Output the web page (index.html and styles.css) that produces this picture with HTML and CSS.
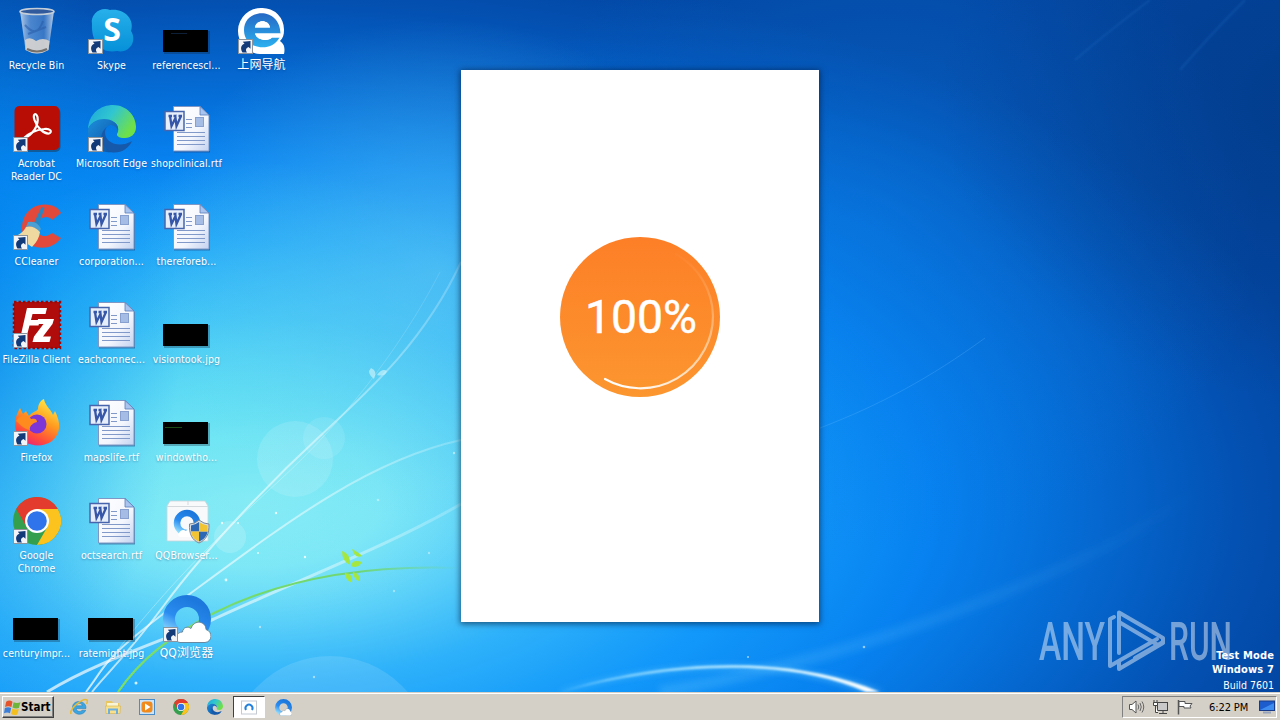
FILE: index.html
```html
<!DOCTYPE html>
<html lang="en">

<head>
    <meta charset="utf-8">
    <title>Desktop</title>
    <link rel="stylesheet" href="styles.css">
</head>

<body>
    <!-- shared icons -->
    <svg class="defs" width="0" height="0">
        <defs>
            <linearGradient id="paper" x1="0" y1="0" x2="1" y2="1">
                <stop offset="0" stop-color="#fff" />
                <stop offset=".6" stop-color="#f3f6fd" />
                <stop offset="1" stop-color="#c3d2f0" />
            </linearGradient>
            <linearGradient id="edgeTop" x1="0" y1="0" x2="1" y2=".5">
                <stop offset="0" stop-color="#1ba4dc" />
                <stop offset=".5" stop-color="#30c6d0" />
                <stop offset="1" stop-color="#6fe048" />
            </linearGradient>
            <linearGradient id="edgeLow" x1="0" y1="0" x2="1" y2="1">
                <stop offset="0" stop-color="#1d8fdc" />
                <stop offset="1" stop-color="#0c4ea0" />
            </linearGradient>
            <linearGradient id="qqRing" x1=".7" y1="0" x2=".2" y2="1">
                <stop offset="0" stop-color="#1c78dc" />
                <stop offset=".55" stop-color="#2b8cf0" />
                <stop offset="1" stop-color="#8fdcff" />
            </linearGradient>
            <linearGradient id="foxBody" x1=".8" y1="0" x2=".3" y2="1">
                <stop offset="0" stop-color="#fff04a" />
                <stop offset=".45" stop-color="#ff9a1f" />
                <stop offset=".8" stop-color="#ff4a3c" />
                <stop offset="1" stop-color="#e8257a" />
            </linearGradient>
            <linearGradient id="skypeBg" x1="0" y1="0" x2="0" y2="1">
                <stop offset="0" stop-color="#27b0ea" />
                <stop offset="1" stop-color="#0690d8" />
            </linearGradient>
            <linearGradient id="glass" x1="0" y1="0" x2="1" y2="0">
                <stop offset="0" stop-color="#c9d9ec" stop-opacity=".9" />
                <stop offset=".3" stop-color="#7ba3da" stop-opacity=".6" />
                <stop offset=".7" stop-color="#5a88ca" stop-opacity=".6" />
                <stop offset="1" stop-color="#d0deee" stop-opacity=".9" />
            </linearGradient>
            <linearGradient id="navBlue" x1="0" y1="0" x2="0" y2="1">
                <stop offset="0" stop-color="#2568c4" />
                <stop offset="1" stop-color="#2bb0f0" />
            </linearGradient>

            <symbol id="arrow" viewBox="0 0 15 15">
                <rect x=".5" y=".5" width="14" height="14" fill="#f2f4f7" stroke="#8d949c" />
                <path d="M4.500 13.500C2 9.500 3 6 6.500 4.800L4.800 2.800 12.500 2V9.800L10.500 8C8 9 7.200 11 9 13.500Z" fill="#123a78" />
            </symbol>

            <symbol id="word" viewBox="0 0 48 48">
                <path d="M11 2.500H38L47 11V47.500H11Z" fill="#1c3c78" opacity=".5" />
                <path d="M10.500 1.500H37L46 10V46H10.500Z" fill="url(#paper)" stroke="#7f97c4" />
                <path d="M37 1.500V10H46Z" fill="#a9c4ee" stroke="#5c7dba" stroke-width=".8" />
                <path d="M23 14.500H29M23 18.500H29M23 22.500H29M14 27.500H42M14 31.500H42M14 35.500H42M14 39.500H42" stroke="#8099c8" />
                <rect x="32.500" y="12.500" width="8" height="9" fill="#a5bce4" stroke="#87a0d0" />
                <rect x="2" y="6.500" width="19" height="19" fill="#e6eefc" stroke="#4765ac" stroke-width="1.500" />
                <path d="M5.500 11H9M7 11L8.500 21 12.500 13 13.500 21 18 11M10.500 11H13.500M15.500 11H19" fill="none" stroke="#3656a8" stroke-width="2.300" />
            </symbol>

            <symbol id="thumb" viewBox="0 0 48 48">
                <rect x="1" y="24" width="46" height="23" fill="#123" opacity=".3" />
                <rect x="0" y="23" width="45" height="22" />
            </symbol>

            <symbol id="chrome" viewBox="0 0 48 48">
                <circle cx="24" cy="24" r="24" fill="#34a04e" />
                <path d="M3.200 12L13.600 30 24 24V12H44.800A24 24 0 0 0 3.200 12Z" fill="#e33b2e" />
                <path d="M24 12H44.800A24 24 0 0 1 24 48L34.400 30Z" fill="#fcc31e" />
                <circle cx="24" cy="24" r="12" fill="#fff" />
                <circle cx="24" cy="24" r="9.800" fill="#2f74ea" />
            </symbol>

            <symbol id="edge" viewBox="0 0 48 48">
                <path d="M0 24C1 8 13 0 25 0C39 0 48 11 48 22C48 29 43 33 37 33C31 33 27 31 30 27C32 18 24 15 16 15C7 15 2 19 0 24Z" fill="url(#edgeTop)" />
                <path d="M0 25C2 18 8 14 16 14C25 14 31 19 30 26C29 22 25 20 22 20C12 22 12 40 26 47C12 49 -1 39 0 25Z" fill="url(#edgeLow)" />
                <path d="M22 20C17 22 16 27 18 32C22 40 34 42 44 36C41 43 34 48 25 47.500C11 43 9 26 22 20Z" fill="#1659aa" />
            </symbol>

            <symbol id="qq" viewBox="0 0 48 48">
                <circle cx="24" cy="24" r="18" fill="none" stroke="url(#qqRing)" stroke-width="12" />
                <path d="M17 47.500C11 47 12 37 19.500 37C20 32 25 31 28 33.500C31 24 43 26 43 34.500C50 36.500 49.500 47 42 47.500Z" fill="#fff" stroke="#5f7f96" stroke-width=".9" />
            </symbol>
        </defs>
    </svg>

    <div class="screen">
        <div class="desktop">
            <svg class="wallpaper" viewBox="0 0 1280 692" width="1280" height="692">
                <defs>
                    <linearGradient id="fadeGreen" gradientUnits="userSpaceOnUse" x1="118" y1="0" x2="460" y2="0">
                        <stop offset="0" stop-color="#7ddf62" />
                        <stop offset=".7" stop-color="#6fd673" />
                        <stop offset="1" stop-color="#6fd673" stop-opacity="0" />
                    </linearGradient>
                    <linearGradient id="fadeWhite" gradientUnits="userSpaceOnUse" x1="60" y1="0" x2="460" y2="0">
                        <stop offset="0" stop-color="#fff" stop-opacity=".7" />
                        <stop offset=".5" stop-color="#fff" stop-opacity=".55" />
                        <stop offset="1" stop-color="#fff" stop-opacity=".2" />
                    </linearGradient>
                    <linearGradient id="swoosh" gradientUnits="userSpaceOnUse" x1="560" y1="0" x2="880" y2="0">
                        <stop offset="0" stop-color="#8fdcff" stop-opacity=".7" />
                        <stop offset=".6" stop-color="#c8f0ff" />
                        <stop offset="1" stop-color="#fff" />
                    </linearGradient>
                    <linearGradient id="ray" gradientUnits="userSpaceOnUse" x1="660" y1="0" x2="1200" y2="0">
                        <stop offset="0" stop-color="#5cc0ff" stop-opacity=".3" />
                        <stop offset="1" stop-color="#5cc0ff" stop-opacity="0" />
                    </linearGradient>
                    <filter id="soft" x="-10%" y="-30%" width="120%" height="160%">
                        <feGaussianBlur stdDeviation="3" />
                    </filter>
                    <filter id="softer" x="-10%" y="-30%" width="120%" height="160%">
                        <feGaussianBlur stdDeviation="0.8" />
                    </filter>
                </defs>
                <!-- bubbles -->
                <g fill="#fff">
                    <circle cx="295" cy="459" r="38" opacity=".13" />
                    <circle cx="324" cy="438" r="21" opacity=".1" />
                    <circle cx="230" cy="537" r="16" opacity=".17" />
                    <circle cx="330" cy="758" r="102" opacity=".12" />
                    <circle cx="238" cy="523" r="1" opacity=".8" />
                    <circle cx="276" cy="513" r="1.200" opacity=".8" />
                    <circle cx="222" cy="523" r="1.200" opacity=".8" />
                    <circle cx="226" cy="580" r="1.400" opacity=".8" />
                    <circle cx="258" cy="553" r="1" opacity=".8" />
                    <circle cx="305" cy="557" r="1.200" opacity=".8" />
                    <circle cx="260" cy="627" r="1.200" opacity=".5" />
                    <circle cx="378" cy="500" r="1.300" opacity=".4" />
                    <circle cx="454" cy="453" r="1.200" opacity=".5" />
                    <circle cx="429" cy="553" r="1.200" opacity=".4" />
                    <circle cx="394" cy="591" r="1.200" opacity=".4" />
                    <circle cx="136" cy="683" r="1.500" opacity=".8" />
                    <circle cx="314" cy="677" r="1.200" opacity=".5" />
                    <circle cx="748" cy="657" r="1" opacity=".6" />
                    <circle cx="864" cy="647" r="1.300" opacity=".6" />
                </g>
                <!-- light rays -->
                <path d="M660 692C820 665 980 610 1120 540L1280 440" fill="none" stroke="url(#ray)" stroke-width="12" filter="url(#soft)" />
                <path d="M820 428C880 405 930 378 985 338" fill="none" stroke="#6cc0ff" stroke-opacity=".25" />
                <path d="M1180 70Q1210 35 1245 0M1075 60Q1110 30 1150 0" fill="none" stroke="#3f8ee0" stroke-opacity=".17" stroke-width="2" filter="url(#softer)" />
                <!-- stems -->
                <g fill="none" stroke="url(#fadeWhite)">
                    <path d="M461 262C425 340 372 388 320 436S205 550 165 604S105 675 92 692" stroke-width="2" />
                    <path d="M440 272C400 350 340 425 280 480S160 590 86 692" stroke-width="1" opacity=".5" />
                    <path d="M461 440C370 460 290 520 195 590S110 660 86 692" stroke-width="2" />
                    <path d="M461 504C390 545 310 575 214 619C150 645 90 665 47 692" stroke-width="3" />
                </g>
                <path d="M461 568C380 565 290 575 214 613C170 636 140 660 118 692" fill="none" stroke="url(#fadeGreen)" stroke-width="2.200" />
                <g fill="#a5e640">
                    <path d="M342 551Q351 554 350 565Q342 561 342 551ZM352 549Q361 554 362 556Q355 559 352 549ZM351 566Q352 559 362 562Q358 569 351 566ZM345 573Q353 573 352 583Q345 580 345 573ZM353 572Q361 574 359 581Q354 580 353 572Z" />
                </g>
                <g fill="#c5f1fa" opacity=".7">
                    <path d="M374 379Q366 373 371 368Q378 371 374 379ZM377 375Q382 368 387 371Q385 377 377 375Z" />
                </g>
                <!-- bottom swoosh -->
                <path d="M558 692C650 662 780 652 884 692L864 692C780 658 660 664 564 692Z" fill="#7fd4ff" opacity=".5" filter="url(#soft)" />
                <path d="M560 692C650 663 780 650 880 692H866C782 655 660 664.500 560 692Z" fill="url(#swoosh)" filter="url(#softer)" />
            </svg>

            <div class="icons">
                <div class="icon">
                    <svg viewBox="0 0 48 48">
                        <path d="M7 4L12.500 43Q24 50 35.500 43L41 4Z" fill="url(#glass)" />
                        <path d="M12 33Q17 29 23 34Q30 30 36.500 34L35.500 43Q24 50 12.500 43Z" fill="#d9d5cf" opacity=".9" />
                        <path d="M14 42Q24 47 34 42" fill="none" stroke="#74706c" stroke-width="2" />
                        <path d="M12 18Q24 32 30 14M15 27L33 20" fill="none" stroke="#2c5da8" stroke-width="2" opacity=".6" />
                        <ellipse cx="24" cy="4.500" rx="17" ry="3" fill="#315a9c" stroke="#c4ced8" stroke-width="1.600" />
                    </svg>
                    <span class="label">Recycle Bin</span>
                </div>
                <div class="icon">
                    <svg viewBox="0 0 48 48">
                        <path d="M4 17C2 7 13 -1 22 3C36 1 47 12 43 24C50 35 40 47 29 44C14 47 3 36 4 17Z" fill="url(#skypeBg)" />
                        <text class="skype-s" x="24" y="34" text-anchor="middle">S</text>
                        <use href="#arrow" x="0" y="32" width="15" height="15" />
                    </svg>
                    <span class="label">Skype</span>
                </div>
                <div class="icon">
                    <svg viewBox="0 0 48 48">
                        <use href="#thumb" />
                        <path d="M8 26.500H24" stroke="#0e2038" />
                    </svg>
                    <span class="label">referencescl...</span>
                </div>
                <div class="icon">
                    <svg viewBox="0 0 48 48">
                        <path d="M24 1A21.500 21.500 0 0 1 46 23C46 28 45 31 42 34Q48 38 46 47H22A23 23 0 0 1 24 1Z" fill="#fff" />
                        <path d="M42.500 26.500H17C19 34 31 34.500 34 30.500H41.500C34 46 6 43 6 23C6 1 42 -1 42.500 26.500ZM17 20.500H32C31 12 18 12 17 20.500Z" fill="url(#navBlue)" fill-rule="evenodd" />
                        <path d="M17 20.500C18 12 31 12 32 20.500ZM17 26.500H42.500L41.500 30.500H34C31 34.500 19 34 17 26.500Z" fill="#fff" />
                        <use href="#arrow" x="0" y="32" width="15" height="15" />
                    </svg>
                    <span class="label cjk">上网导航</span>
                </div>

                <div class="icon">
                    <svg viewBox="0 0 48 48">
                        <rect x="2.500" y="3" width="45" height="44" rx="5" fill="#222" opacity=".4" />
                        <rect x="1.500" y="1" width="45" height="44" rx="5" fill="#b80d05" />
                        <path d="M11 33C20 30 26 20 24.500 12C23 7 19.500 9 21.500 15C24 23 31 29 36 28.500C40 27 37 23 31 24C23 25 16 28 11 33Z" fill="none" stroke="#fff" stroke-width="2.200" />
                        <use href="#arrow" x="0" y="32" width="15" height="15" />
                    </svg>
                    <span class="label">Acrobat<br>Reader DC</span>
                </div>
                <div class="icon">
                    <svg viewBox="0 0 48 48">
                        <use href="#edge" />
                        <use href="#arrow" x="0" y="32" width="15" height="15" />
                    </svg>
                    <span class="label">Microsoft Edge</span>
                </div>
                <div class="icon">
                    <svg viewBox="0 0 48 48"><use href="#word" /></svg>
                    <span class="label">shopclinical.rtf</span>
                </div>
                <div class="icon empty"></div>

                <div class="icon">
                    <svg viewBox="0 0 48 48">
                        <path d="M48 10L39 17C34 11 25 15 24 23C23 33 32 36 39 30L48 35C39 48 19 48 11 35C4 16 17 1 32 1.500C40 2 45 4 48 10Z" fill="#e2493a" />
                        <path d="M28.500 4L31.500 5 25 24 20 22Z" fill="#2b86c0" />
                        <path d="M15 19Q24 17 28 26L26 29Q20 22 13 24Z" fill="#4b9fd2" />
                        <path d="M13 24Q20 22 27 29Q26 37 19 44L3 33Q10 30 13 24Z" fill="#f0d9a0" />
                        <use href="#arrow" x="0" y="32" width="15" height="15" />
                    </svg>
                    <span class="label">CCleaner</span>
                </div>
                <div class="icon">
                    <svg viewBox="0 0 48 48"><use href="#word" /></svg>
                    <span class="label">corporation...</span>
                </div>
                <div class="icon">
                    <svg viewBox="0 0 48 48"><use href="#word" /></svg>
                    <span class="label">thereforeb...</span>
                </div>
                <div class="icon empty"></div>

                <div class="icon">
                    <svg viewBox="0 0 48 48">
                        <rect x="1" y="1" width="46" height="46" fill="#b00c0c" stroke="#9c0808" stroke-width="2.500" stroke-dasharray="2.500 2" />
                        <path d="M14 7H34L32.500 13H19.500L18 19H27L25.500 24.500H16.500L13 38H7Z" fill="#fff" />
                        <path d="M25 18H41L39.500 23 30 35.500H38L36.500 41H19.500L21 35.500 30.500 23H24Z" fill="#fff" />
                        <use href="#arrow" x="0" y="32" width="15" height="15" />
                    </svg>
                    <span class="label">FileZilla Client</span>
                </div>
                <div class="icon">
                    <svg viewBox="0 0 48 48"><use href="#word" /></svg>
                    <span class="label">eachconnec...</span>
                </div>
                <div class="icon">
                    <svg viewBox="0 0 48 48"><use href="#thumb" /></svg>
                    <span class="label">visiontook.jpg</span>
                </div>
                <div class="icon empty"></div>

                <div class="icon">
                    <svg viewBox="0 0 48 48">
                        <path d="M7 9L10 15 13 12 16 17C20 12 23 13 25 10C25 5 28 1 31 0C32 7 38 10 40 16L42 12C48 24 48 34 39 42C28 50 10 47 4 34C0 25 3 16 7 9Z" fill="url(#foxBody)" />
                        <circle cx="24" cy="25" r="9.500" fill="#7d35d8" />
                        <path d="M3 22C7 15 16 16 18 20C23 19 24 21 24 23C20 24 16 27 17 31C10 30 6 24 3 22Z" fill="#ff8a1e" />
                        <use href="#arrow" x="0" y="32" width="15" height="15" />
                    </svg>
                    <span class="label">Firefox</span>
                </div>
                <div class="icon">
                    <svg viewBox="0 0 48 48"><use href="#word" /></svg>
                    <span class="label">mapslife.rtf</span>
                </div>
                <div class="icon">
                    <svg viewBox="0 0 48 48">
                        <use href="#thumb" />
                        <path d="M2 28.500H19" stroke="#1c4a14" />
                    </svg>
                    <span class="label">windowtho...</span>
                </div>
                <div class="icon empty"></div>

                <div class="icon">
                    <svg viewBox="0 0 48 48">
                        <use href="#chrome" />
                        <use href="#arrow" x="0" y="32" width="15" height="15" />
                    </svg>
                    <span class="label">Google<br>Chrome</span>
                </div>
                <div class="icon">
                    <svg viewBox="0 0 48 48"><use href="#word" /></svg>
                    <span class="label">octsearch.rtf</span>
                </div>
                <div class="icon">
                    <svg viewBox="0 0 48 48">
                        <path d="M7 4H42L45 9V44H4V9Z" fill="#f7f9fb" stroke="#c9d4da" stroke-width=".8" />
                        <path d="M4 9.500H45M25 4V8" stroke="#d3d9dd" />
                        <circle cx="24" cy="26" r="10" fill="none" stroke="url(#qqRing)" stroke-width="6.500" />
                        <path d="M15 38Q18 31 23 34Q28 26 34 36V40H17Z" fill="#fff" />
                        <path d="M36 23Q41 27 46 27C46.500 37 43 43 36 46C29 43 26 37 26.500 27Q32 27 36 23Z" fill="#d5dde5" stroke="#7c8790" />
                        <path d="M36 25Q32 28 28 28.500V34.500H36ZM36 34.500H44.500C44 39 41 42.500 36 44.500Z" fill="#2d68b4" />
                        <path d="M36 25Q40 28 44.500 28.500V34.500H36ZM36 34.500H28C28.500 39 31 42.500 36 44.500Z" fill="#f2c434" />
                    </svg>
                    <span class="label">QQBrowser...</span>
                </div>
                <div class="icon empty"></div>

                <div class="icon">
                    <svg viewBox="0 0 48 48"><use href="#thumb" /></svg>
                    <span class="label">centuryimpr...</span>
                </div>
                <div class="icon">
                    <svg viewBox="0 0 48 48"><use href="#thumb" /></svg>
                    <span class="label">ratemight.jpg</span>
                </div>
                <div class="icon">
                    <svg viewBox="0 0 48 48">
                        <use href="#qq" />
                        <use href="#arrow" x="0" y="32" width="15" height="15" />
                    </svg>
                    <span class="label cjk">QQ浏览器</span>
                </div>
            </div>

            <!-- installer window -->
            <div class="installer">
                <svg class="progress" viewBox="0 0 160 160" width="160" height="160">
                    <defs>
                        <linearGradient id="disc" x1="0" y1="0" x2="0" y2="1">
                            <stop offset="0" stop-color="#fd7f27" />
                            <stop offset="1" stop-color="#fc962f" />
                        </linearGradient>
                        <linearGradient id="arcFade" gradientUnits="userSpaceOnUse" x1="60" y1="152" x2="120" y2="15">
                            <stop offset="0" stop-color="#fff" />
                            <stop offset=".5" stop-color="#ffe3c4" stop-opacity=".65" />
                            <stop offset="1" stop-color="#ffe3c4" stop-opacity="0" />
                        </linearGradient>
                    </defs>
                    <circle cx="80" cy="80" r="80" fill="url(#disc)" />
                    <path d="M45 142A72.500 72.500 0 0 0 153 79A72.500 72.500 0 0 0 116 17" fill="none" stroke="url(#arcFade)" stroke-width="2.200" stroke-linecap="round" />
                    <text class="percent" x="25" y="95.500" textLength="112" lengthAdjust="spacingAndGlyphs">100%</text>
                </svg>
            </div>

            <svg class="watermark" viewBox="0 0 200 70" width="200" height="70">
                <text x="2" y="54" textLength="66" lengthAdjust="spacingAndGlyphs">ANY</text>
                <text x="132" y="54" textLength="63" lengthAdjust="spacingAndGlyphs">RUN</text>
                <g fill="none" stroke="#fff" stroke-width="4" stroke-linejoin="round" stroke-linecap="round">
                    <path d="M82 47V6.500L126 32V36L98 52" />
                    <path d="M82 16L120 38.500" />
                    <path d="M77 11L73 13V60L120 33" />
                    <path d="M82 56V63L126 37" />
                </g>
            </svg>

            <div class="build">
                <b>Test Mode</b>
                <b>Windows 7</b>
                <span>Build 7601</span>
            </div>
        </div>

        <div class="taskbar">
            <div class="start">
                <svg viewBox="0 0 16 16" width="17" height="17">
                    <path d="M2 2.500Q5 .5 8 2.500L7 7.500Q4 6 1 7.500Z" fill="#e5542a" />
                    <path d="M9 3Q12 4.500 15.500 3L14 8.500Q11 9.500 8 8Z" fill="#6fb53a" />
                    <path d="M.8 8.500Q4 7 6.800 8.500L5.600 13.500Q3 12 0 13.500Z" fill="#3c7fd8" />
                    <path d="M7.800 9Q11 10.500 14 9.500L12.500 14.500Q9.500 15.800 6.600 14Z" fill="#f4c020" />
                </svg>
                <span>Start</span>
            </div>
            <div class="quick">
                <div class="task">
                    <svg viewBox="0 0 18 18" width="18" height="18">
                        <path d="M16 10.500H6.200C6.500 14 11 14.300 12 12.200H15.700C13.500 18.500 2.500 17.500 2.500 9.500C2.500 1 16.500 1.500 16 10.500ZM6.200 7.800H12.200C12 4.500 6.700 4.500 6.200 7.800Z" fill="#3aa5e0" fill-rule="evenodd" stroke="#1f78b8" stroke-width=".5" />
                        <path d="M1 16C-1 11 13 -.5 17 2C18 3 17 5 16.500 6" fill="none" stroke="#e8b935" stroke-width="1.500" />
                    </svg>
                </div>
                <div class="task">
                    <svg viewBox="0 0 18 18" width="18" height="18">
                        <path d="M2 3H8L9 5H15V15H2Z" fill="#e9c660" />
                        <path d="M3 5H14V9H3Z" fill="#f9f4d6" />
                        <path d="M1.500 8H16.500L16 15.500H2Z" fill="#f8e08c" stroke="#d5b14c" stroke-width=".6" />
                        <path d="M5 16V11.500H13V16" fill="none" stroke="#6caee0" stroke-width="2" />
                    </svg>
                </div>
                <div class="task">
                    <svg viewBox="0 0 18 18" width="18" height="18">
                        <rect x="1.500" y="1.500" width="15" height="15" fill="#cde4f6" stroke="#4a8cc8" />
                        <rect x="3.500" y="3.500" width="11" height="11" rx="3" fill="#f08a1c" />
                        <path d="M7 5.500L12.500 9 7 12.500Z" fill="#fff" />
                    </svg>
                </div>
                <div class="task"><svg viewBox="0 0 48 48" width="16" height="16"><use href="#chrome" /></svg></div>
                <div class="task"><svg viewBox="0 0 48 48" width="16" height="16"><use href="#edge" /></svg></div>
                <div class="task active">
                    <svg viewBox="0 0 16 16" width="16" height="16">
                        <rect x=".5" y="2" width="15" height="13" fill="#fff" stroke="#c3cad2" />
                        <path d="M5 11A3.500 3.500 0 1 1 11 11" fill="none" stroke="#2482dc" stroke-width="2" />
                    </svg>
                </div>
                <div class="task"><svg viewBox="0 0 48 48" width="17" height="17"><use href="#qq" /></svg></div>
            </div>
            <div class="tray">
                <svg viewBox="0 0 18 16" width="18" height="16">
                    <path d="M1.500 5.500H4L8 2V14L4 10.500H1.500Z" fill="#fff" stroke="#555" />
                    <path d="M10 5.500Q11.500 8 10 10.500M12 4Q14.500 8 12 12M14 2.500Q17.500 8 14 13.500" fill="none" stroke="#666" />
                </svg>
                <svg viewBox="0 0 18 16" width="18" height="16">
                    <rect x="5.500" y="3.500" width="10" height="8" fill="#c9c9c9" stroke="#444" />
                    <path d="M7 14.500H15M11 11.500V14" stroke="#444" />
                    <path d="M2 1V4M5 1V4M1.500 3.500H5.500V6.500H1.500ZM3.500 6.500V13.500H6" fill="#fff" stroke="#444" />
                </svg>
                <svg viewBox="0 0 18 16" width="18" height="16">
                    <path d="M2.500 1V15.500" stroke="#555" stroke-width="1.500" />
                    <path d="M3 2.500H9V4.500H16L14 7L15 9H8V7.500H3Z" fill="#fff" stroke="#555" />
                </svg>
                <span class="clock">6:22 PM</span>
                <svg viewBox="0 0 16 16" width="16" height="16">
                    <rect x=".5" y="2" width="15" height="9.500" fill="#1c5ccc" stroke="#1a3c88" />
                    <path d="M1 11L15 4V11Z" fill="#3f8cf0" />
                    <path d="M4 13.500H12" stroke="#97a4bb" stroke-width="2" />
                </svg>
            </div>
        </div>
    </div>
</body>

</html>
```
FILE: styles.css
```css
body {
    margin: 0;
    overflow: hidden;
    font-family: "DejaVu Sans Condensed", "DejaVu Sans", "Noto Sans CJK SC", sans-serif;
    font-size: 10.5px;
}

.defs {
    position: absolute;
}

.screen {
    display: flex;
    flex-direction: column;
    width: 1280px;
    height: 720px;
}

.desktop {
    position: relative;
    flex: 1;
    overflow: hidden;
    background:
        radial-gradient(ellipse 240px 420px at -60px 330px, rgba(0, 120, 228, 0.7), rgba(0, 140, 240, 0.4) 50%, rgba(0, 150, 245, 0) 100%),
        radial-gradient(ellipse 380px 300px at 1320px 100px, rgba(2, 52, 120, 0.5), rgba(2, 52, 120, 0) 100%),
        radial-gradient(ellipse 380px 330px at 880px 220px, rgba(10, 125, 230, 0.45), rgba(10, 125, 230, 0) 100%),
        radial-gradient(ellipse 300px 250px at 440px 270px, rgba(110, 210, 240, 0.55), rgba(70, 190, 235, 0) 100%),
        radial-gradient(ellipse 330px 240px at 230px 400px, rgba(90, 225, 240, 0.6), rgba(30, 195, 235, 0) 100%),
        radial-gradient(ellipse 1100px 550px at 250px 500px, #9af0f7 0%, #86e9f8 12%, #5bd0f9 22%, #2fb2fa 33%, #1298fa 47%, #0782f0 62%, #0568d0 77%, #0351b2 90%, #0346a2 100%);
}

.wallpaper {
    position: absolute;
    left: 0;
    top: 0;
}

/* desktop shortcuts */
.icons {
    position: relative;
    display: grid;
    grid-template-columns: repeat(4, 75px);
    grid-auto-rows: 98px;
    margin-left: -1px;
}

.icon {
    display: flex;
    flex-direction: column;
    align-items: center;
    padding-top: 7px;
}

.icon svg {
    width: 48px;
    height: 48px;
    flex: none;
    align-self: flex-start;
    margin-left: 14px;
    overflow: visible;
}

.label {
    margin-top: 4px;
    color: #fff;
    line-height: 13px;
    letter-spacing: 0.1px;
    text-align: center;
    white-space: nowrap;
    text-shadow: 0 1px 2px rgba(0, 40, 90, 0.35);
}

.cjk {
    font-size: 12px;
}

.skype-s {
    font: bold 32px "Open Sans", sans-serif;
    fill: #fff;
}

/* installer window */
.installer {
    position: absolute;
    left: 461px;
    top: 70px;
    width: 358px;
    height: 552px;
    box-sizing: border-box;
    padding: 167px 0 0 99px;
    background: #fff;
    box-shadow: 0 1px 6px 1px rgba(0, 20, 50, 0.6);
}

.progress {
    display: block;
}

.percent {
    font: 400 46px Roboto, sans-serif;
    fill: #fff;
    stroke: #fff;
    stroke-width: 0.5px;
}

/* bottom right corner */
.watermark {
    position: absolute;
    left: 1037px;
    top: 606px;
    opacity: 0.45;
}

.watermark text {
    font: 500 53px Roboto, sans-serif;
    fill: #fff;
}

.build {
    position: absolute;
    right: 6px;
    bottom: -2px;
    display: flex;
    flex-direction: column;
    align-items: flex-end;
    color: #fff;
    line-height: 14px;
}

.build b {
    font-size: 11px;
    letter-spacing: 0.15px;
}

.build span {
    line-height: 17px;
}

/* taskbar */
.taskbar {
    display: flex;
    align-items: center;
    box-sizing: border-box;
    height: 28px;
    padding: 1px 3px 0 2px;
    border-top: 1px solid #d4d0c8;
    background: #d4d0c8;
    box-shadow: inset 0 1px 0 #fff;
}

.start {
    display: flex;
    align-items: center;
    gap: 0;
    width: 52px;
    height: 22px;
    box-sizing: border-box;
    padding-left: 1px;
    border: 1px solid;
    border-color: #fff #404040 #404040 #fff;
    box-shadow: inset -1px -1px 0 #808080;
    font-size: 11.5px;
    font-weight: bold;
}

.quick {
    display: flex;
    gap: 2px;
    margin-left: 9px;
}

.task {
    display: flex;
    align-items: center;
    justify-content: center;
    width: 32px;
    height: 22px;
    box-sizing: border-box;
}

.active {
    border: 1px solid;
    border-color: #404040 #fff #fff #404040;
    background: #fff;
}

.tray {
    display: flex;
    align-items: center;
    gap: 6px;
    margin-left: auto;
    width: 155px;
    height: 22px;
    box-sizing: border-box;
    padding-left: 5px;
    border: 1px solid;
    border-color: #808080 #fff #fff #808080;
}

.clock {
    width: 41px;
    margin: 0 3px 0 9px;
    font-size: 11px;
    letter-spacing: -0.1px;
    white-space: nowrap;
}
```
